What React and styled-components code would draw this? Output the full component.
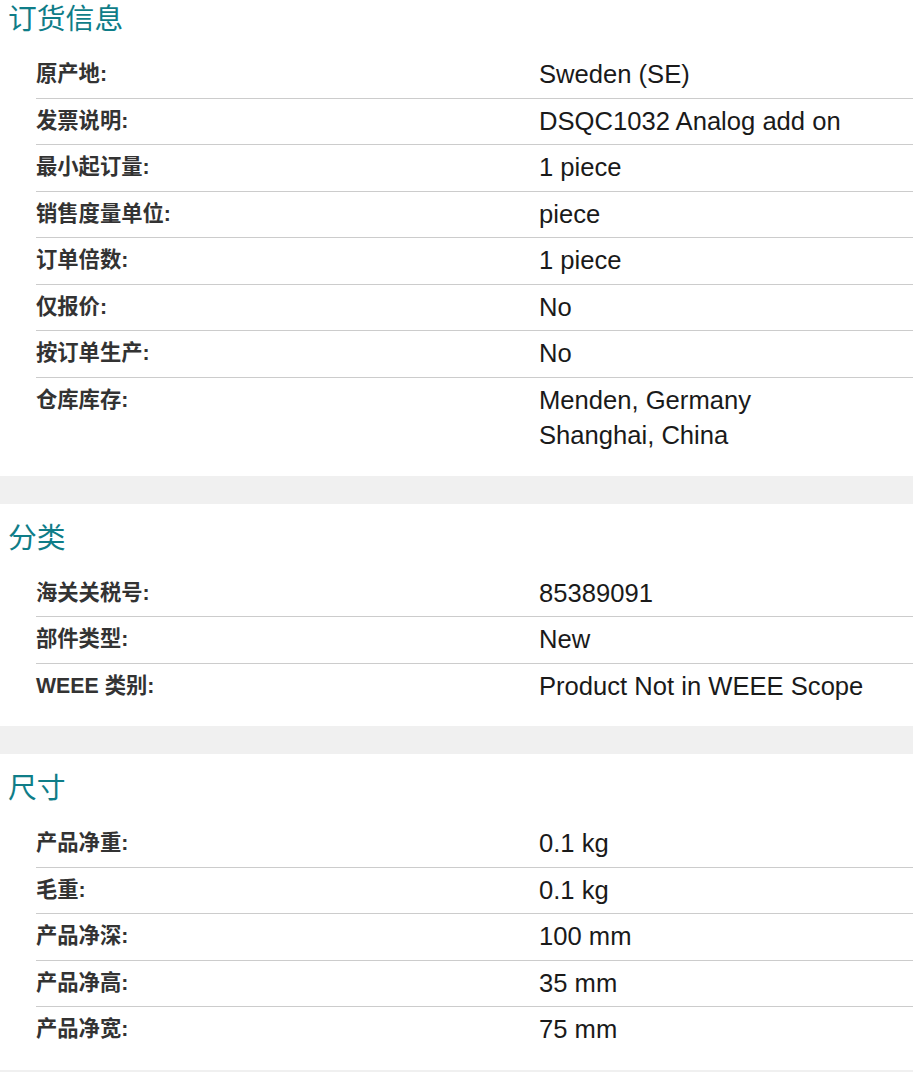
import styled, { createGlobalStyle } from "styled-components";

const GlobalStyle = createGlobalStyle`
  html, body {
    margin: 0;
    padding: 0;
    background: #f0f0f0;
  }
  body {
    font-family: "Liberation Sans", Arial, "Noto Sans CJK SC", sans-serif;
  }
`;

const SECTIONS = [
  {
    title: "订货信息",
    rows: [
      ["原产地:", ["Sweden (SE)"]],
      ["发票说明:", ["DSQC1032 Analog add on"]],
      ["最小起订量:", ["1 piece"]],
      ["销售度量单位:", ["piece"]],
      ["订单倍数:", ["1 piece"]],
      ["仅报价:", ["No"]],
      ["按订单生产:", ["No"]],
      ["仓库库存:", ["Menden, Germany", "Shanghai, China"]],
    ],
  },
  {
    title: "分类",
    rows: [
      ["海关关税号:", ["85389091"]],
      ["部件类型:", ["New"]],
      ["WEEE 类别:", ["Product Not in WEEE Scope"]],
    ],
  },
  {
    title: "尺寸",
    rows: [
      ["产品净重:", ["0.1 kg"]],
      ["毛重:", ["0.1 kg"]],
      ["产品净深:", ["100 mm"]],
      ["产品净高:", ["35 mm"]],
      ["产品净宽:", ["75 mm"]],
    ],
  },
];

export default function App() {
  return (
    <>
      <GlobalStyle />
      <Page>
        {SECTIONS.map((section, i) => (
          <Section key={section.title} $first={i === 0}>
            <Heading>{section.title}</Heading>
            <Table>
              {section.rows.map(([label, values]) => (
                <Row key={label}>
                  <Label>{label}</Label>
                  <Value>
                    {values.map((v) => (
                      <div key={v}>{v}</div>
                    ))}
                  </Value>
                </Row>
              ))}
            </Table>
          </Section>
        ))}
      </Page>
    </>
  );
}

const Page = styled.div`
  display: flex;
  flex-direction: column;
  gap: 28px;
  padding-bottom: 40px;
`;

// the first section is cropped at the top in the reference
const Section = styled.section`
  background: #ffffff;
  padding: ${({ $first }) => ($first ? "0" : "15px")} 0 17px 0;
`;

const Heading = styled.h2`
  margin: 0 0 17.5px 8px;
  font-family: "Noto Sans CJK SC", "Liberation Sans", sans-serif;
  font-size: 28.8px;
  font-weight: 400;
  line-height: 34.6px;
  color: #0f7d88;
`;

const Table = styled.div`
  margin-left: 36px;
  display: flex;
  flex-direction: column;
`;

const Row = styled.div`
  display: grid;
  grid-template-columns: 503px 1fr;
  padding: 5px 0;
  border-bottom: 1px solid #cccccc;

  &:last-child {
    border-bottom: none;
  }
`;

const Label = styled.div`
  font-family: "Liberation Sans", "Noto Sans CJK SC", sans-serif;
  font-size: 21.3px;
  font-weight: 700;
  line-height: 35.5px;
  color: #333333;
`;

const Value = styled.div`
  font-family: "Liberation Sans", Arial, sans-serif;
  font-size: 25.6px;
  line-height: 35.5px;
  color: #1a1a1a;
`;
